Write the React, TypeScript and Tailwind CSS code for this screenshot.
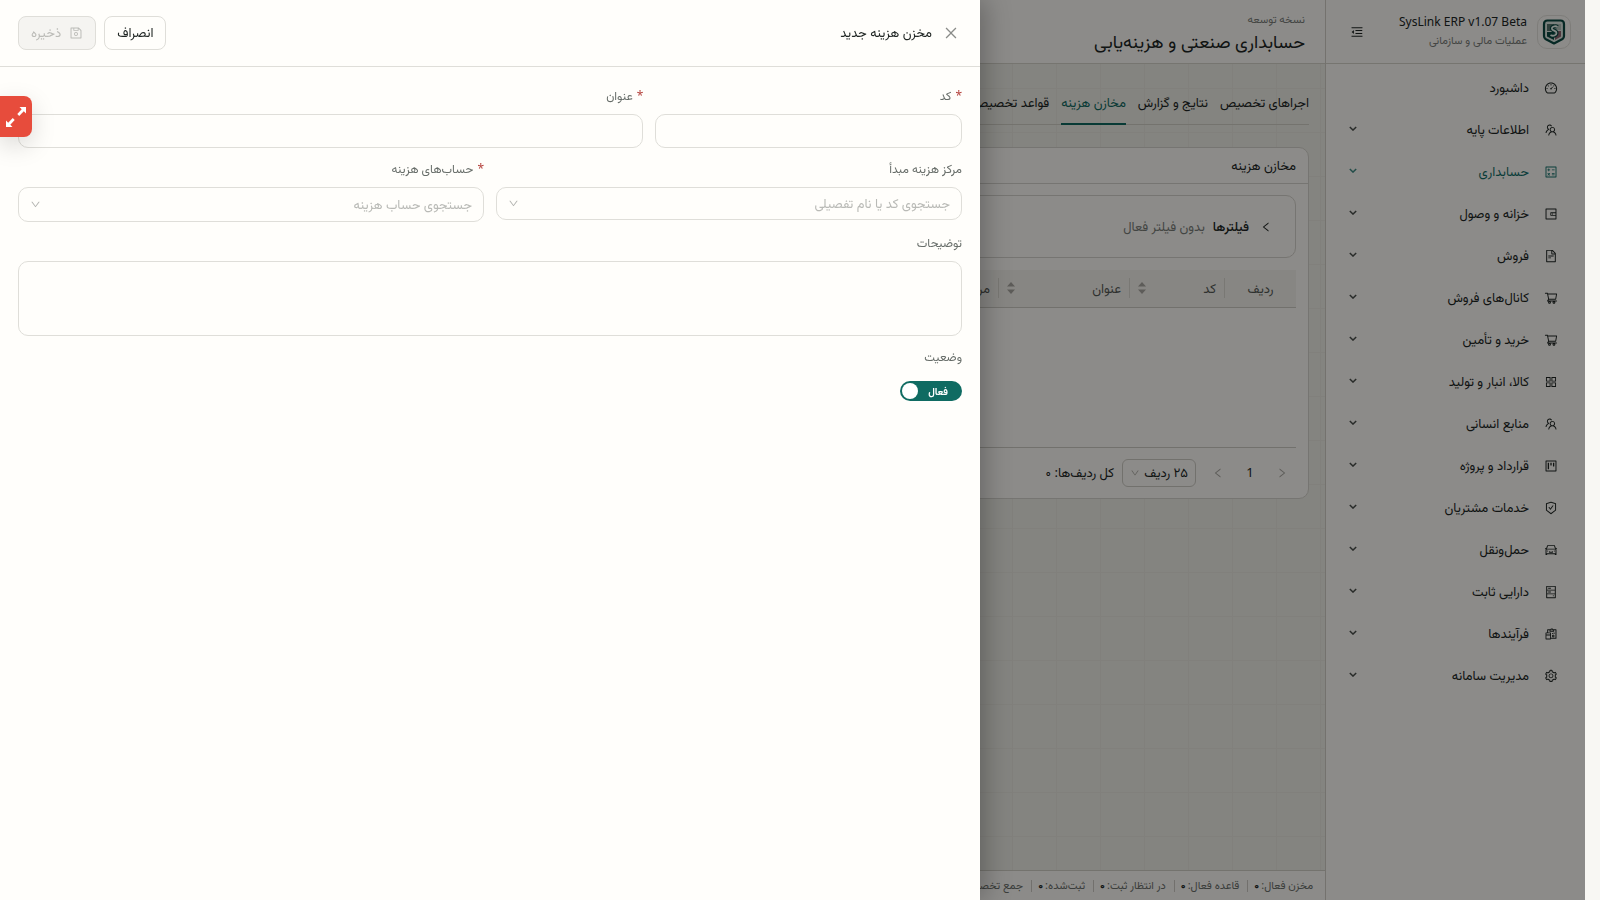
import type { ReactNode } from 'react'
import type { IconType } from 'react-icons'
import {
  AiOutlineAppstore,
  AiOutlineCalculator,
  AiOutlineCar,
  AiOutlineClose,
  AiOutlineDashboard,
  AiOutlineDown,
  AiOutlineFileText,
  AiOutlineHdd,
  AiOutlineLeft,
  AiOutlineMenuFold,
  AiOutlineProject,
  AiOutlineReconciliation,
  AiOutlineRight,
  AiOutlineSafetyCertificate,
  AiOutlineSave,
  AiOutlineSetting,
  AiOutlineShoppingCart,
  AiOutlineTeam,
  AiOutlineWallet,
} from 'react-icons/ai'
import clsx from 'clsx'

interface MenuItem {
  label: string
  icon: IconType
  active?: boolean
  leaf?: boolean
}

const MENU: MenuItem[] = [
  { label: 'داشبورد', icon: AiOutlineDashboard, leaf: true },
  { label: 'اطلاعات پایه', icon: AiOutlineTeam },
  { label: 'حسابداری', icon: AiOutlineCalculator, active: true },
  { label: 'خزانه و وصول', icon: AiOutlineWallet },
  { label: 'فروش', icon: AiOutlineFileText },
  { label: 'کانال‌های فروش', icon: AiOutlineShoppingCart },
  { label: 'خرید و تأمین', icon: AiOutlineShoppingCart },
  { label: 'کالا، انبار و تولید', icon: AiOutlineAppstore },
  { label: 'منابع انسانی', icon: AiOutlineTeam },
  { label: 'قرارداد و پروژه', icon: AiOutlineProject },
  { label: 'خدمات مشتریان', icon: AiOutlineSafetyCertificate },
  { label: 'حمل‌ونقل', icon: AiOutlineCar },
  { label: 'دارایی ثابت', icon: AiOutlineHdd },
  { label: 'فرآیندها', icon: AiOutlineReconciliation },
  { label: 'مدیریت سامانه', icon: AiOutlineSetting },
]

const TABS = ['اجراهای تخصیص', 'نتایج و گزارش', 'مخازن هزینه', 'قواعد تخصیص']
const STATS = ['مخزن فعال:', 'قاعده فعال:', 'در انتظار ثبت:', 'ثبت‌شده:', 'جمع تخصیص:']

function Logo() {
  return (
    <span className="grid size-[34px] shrink-0 place-items-center rounded-[10px] border border-[#e6e4de]">
      <svg viewBox="0 0 24 26" className="h-[26px] w-6" aria-hidden="true">
        <path d="M5.500 1.500h13q3.500 0 3.500 3.500v12q0 2-1.500 3L12 24.500 3.500 20Q2 19 2 17V5q0-3.500 3.500-3.500z" fill="#dfe9e3" stroke="#0b4a43" strokeWidth="2.200" strokeLinejoin="round" />
        <path d="M5 5h7v7H5z" fill="#56756e" />
        <path d="M12 5h7v6h-7z" fill="#b4c3bc" />
        <path d="M5 13h7v8l-7-3.500z" fill="#0b4a43" />
        <path d="M13 12h6v5.500L13 21z" fill="#8d6470" />
        <path d="M15.500 8c-2-1.500-6-.5-5.500 2 .5 2 4.500 1.500 4.500 4s-3.500 3.500-6 2" fill="none" stroke="#0b4a43" strokeWidth="4" />
        <path d="M15.500 8c-2-1.500-6-.5-5.500 2 .5 2 4.500 1.500 4.500 4s-3.500 3.500-6 2" fill="none" stroke="#f0faf4" strokeWidth="1.800" />
      </svg>
    </span>
  )
}

function Sidebar() {
  return (
    <aside className="w-[260px] shrink-0 border-l border-[#d3d0c8] bg-[#fffdf9]">
      <div className="flex h-16 items-center gap-2.5 border-b border-[#d8d5cd] pr-[14px] pl-[22px]">
        <Logo />
        <div className="flex-1 pb-1">
          <div className="text-right text-xs leading-5" dir="ltr">SysLink ERP v1.07 Beta</div>
          <div className="text-[11px] leading-4 text-[#7b7f7b]">عملیات مالی و سازمانی</div>
        </div>
        <button type="button" aria-label="جمع کردن منو" className="grid size-[18px] place-items-center">
          <AiOutlineMenuFold className="size-[14px]" />
        </button>
      </div>
      <nav className="pt-[3px]">
        {MENU.map(({ label, icon: Icon, active, leaf }) => (
          <a
            key={label}
            href="#"
            className={clsx('flex h-[42px] items-center gap-[15px] pr-[27px] pl-[23px] text-[13px]', active && 'text-[#12706a]')}
          >
            <Icon className="size-[14px] shrink-0" />
            <span className="flex-1">{label}</span>
            {!leaf && (
              <svg viewBox="0 0 10 6" className="mb-1 h-[5px] w-2 opacity-80" fill="none" stroke="currentColor" strokeWidth="1.800" aria-hidden="true">
                <path d="m1 1 4 4 4-4" />
              </svg>
            )}
          </a>
        ))}
      </nav>
    </aside>
  )
}

function Sorter() {
  return (
    <svg viewBox="0 0 8 12" className="h-3 w-2" fill="#a9a8a2" aria-hidden="true">
      <path d="M4 0 8 4.500H0zM4 12 8 7.500H0z" />
    </svg>
  )
}

function HeadCell({ label, className, sortable }: { label: string; className: string; sortable?: boolean }) {
  return (
    <th scope="col" className={clsx('p-0 font-normal', className)}>
      <div className="flex h-5 items-center justify-between border-l border-[#dddbd4] px-2">
        <span>{label}</span>
        {sortable && <Sorter />}
      </div>
    </th>
  )
}

function PoolCard() {
  return (
    <section className="mt-[22px] rounded-[10px] border border-[#d8d6cf] bg-[#fffdf9] text-[13px]">
      <h2 className="flex h-9 items-center border-b border-[#d8d6cf] px-3">مخازن هزینه</h2>
      <div className="px-3 py-[11px]">
        <button type="button" className="flex h-[63px] w-full items-center gap-2 rounded-[10px] border border-[#d8d6cf] px-[23px]">
          <AiOutlineLeft className="ml-[3px] size-3" />
          <span className="font-medium">فیلترها</span>
          <span className="text-[#7b7f7b]">بدون فیلتر فعال</span>
        </button>
        <table className="mt-3 w-full table-fixed border-b border-[#d0cec7] text-right text-[#555a57]">
          <thead className="bg-[#f6f4ee]">
            <tr className="h-[37px] border-b border-[#d0cec7]">
              <th scope="col" className="w-[72px] p-0 font-normal">
                <div className="flex h-5 items-center justify-center border-l border-[#dddbd4]">ردیف</div>
              </th>
              <HeadCell label="کد" className="w-[95px]" sortable />
              <HeadCell label="عنوان" className="w-[131px]" sortable />
              <HeadCell label="مرکز هزینه" className="w-auto" />
            </tr>
          </thead>
          <tbody>
            <tr className="h-[140px]">
              <td colSpan={4} />
            </tr>
          </tbody>
        </table>
        <div className="mt-[11px] flex h-7 items-center">
          <button type="button" aria-label="صفحه قبل" disabled className="grid size-7 place-items-center text-[#aaa9a3]">
            <AiOutlineRight className="size-3" />
          </button>
          <button type="button" className="mx-1 size-7">1</button>
          <button type="button" aria-label="صفحه بعد" disabled className="grid size-7 place-items-center text-[#aaa9a3]">
            <AiOutlineLeft className="size-3" />
          </button>
          <div className="mr-2 flex h-7 w-[74px] items-center rounded-md border border-[#d0cec7] px-[7px]">
            <select aria-label="تعداد ردیف" className="min-w-0 flex-1 appearance-none bg-transparent">
              <option>۲۵ ردیف</option>
            </select>
            <AiOutlineDown className="size-[10px] text-[#aaa9a3]" />
          </div>
          <span className="mr-2">کل ردیف‌ها: ۰</span>
        </div>
      </div>
    </section>
  )
}

function Workspace() {
  return (
    <div className="flex min-w-0 flex-1 flex-col">
      <header className="flex h-16 flex-col justify-center border-b border-[#d8d5cd] bg-[#fffdf9] px-5 pt-0.5">
        <div className="text-[11px] leading-4 text-[#7b7f7b]">نسخه توسعه</div>
        <h1 className="text-lg leading-7">حسابداری صنعتی و هزینه‌یابی</h1>
      </header>
      <main className="flex-1 px-4 pt-[18px]">
        <div role="tablist" className="flex h-[43px] gap-3 border-b border-[#d3d1c9] text-[13px]">
          {TABS.map((tab) => {
            const selected = tab === 'مخازن هزینه'
            return (
              <button
                key={tab}
                type="button"
                role="tab"
                aria-selected={selected}
                className={clsx('h-[43px] border-b-2 whitespace-nowrap', selected ? 'border-[#0f6b62] text-[#0f6b62]' : 'border-transparent')}
              >
                {tab}
              </button>
            )
          })}
        </div>
        <PoolCard />
      </main>
      <footer className="flex h-[30px] items-center overflow-hidden border-t border-[#d3d1c9] bg-[#fffdf9] px-3 text-[11px] whitespace-nowrap text-[#6c716d]">
        {STATS.map((stat, i) => (
          <span key={stat} className="flex items-center">
            {i > 0 && <span className="mr-1.5 ml-2 h-3 w-px bg-[#cfcdc6]" />}
            {stat}
            <b className="mr-0.5 text-[#202624]">۰</b>
          </span>
        ))}
      </footer>
    </div>
  )
}

function Field({ id, label, required, className, children }: { id: string; label: string; required?: boolean; className?: string; children: ReactNode }) {
  return (
    <div className={className}>
      <label htmlFor={id} className="mb-[7px] flex h-[22px] items-center gap-1 text-xs text-[#676d69]">
        {required && <span className="text-[#b4413c]">*</span>}
        {label}
      </label>
      {children}
    </div>
  )
}

function SearchSelect({ id, placeholder, className }: { id: string; placeholder: string; className: string }) {
  return (
    <div className={clsx('flex items-center rounded-[10px] border border-[#dfded9] px-[11px]', className)}>
      <input id={id} role="combobox" aria-expanded={false} placeholder={placeholder} className="min-w-0 flex-1 bg-transparent text-[13px] outline-none placeholder:text-[#b9bab6]" />
      <AiOutlineDown className="size-[11px] text-[#b3b4b0]" />
    </div>
  )
}

function PoolDrawer() {
  return (
    <div role="dialog" aria-label="مخزن هزینه جدید" className="fixed inset-y-0 left-0 w-full max-w-[980px] bg-[#fffefb] shadow-[6px_0_24px_rgba(0,0,0,0.25)]">
      <header className="flex h-[67px] items-center border-b border-[#dfded9] px-[18px]">
        <button type="button" aria-label="بستن" className="grid size-[22px] place-items-center text-[#8a8c89]">
          <AiOutlineClose className="size-4" />
        </button>
        <h2 className="mr-2 flex-1 text-[13px]">مخزن هزینه جدید</h2>
        <div className="flex gap-2 text-[13px]">
          <button type="button" className="h-[34px] rounded-lg border border-[#dfded9] px-3">انصراف</button>
          <button type="button" disabled className="flex h-[34px] items-center gap-2 rounded-lg border border-[#dfded9] bg-[#f5f4f1] px-3 text-[#bbbbb7]">
            <AiOutlineSave className="size-[14px]" />
            ذخیره
          </button>
        </div>
      </header>
      <form className="flex flex-col gap-[10px] px-[18px] pt-[18px]">
        <div className="grid grid-cols-3 gap-3">
          <Field id="code" label="کد" required>
            <input id="code" className="block h-[34px] w-full rounded-[10px] border border-[#dfded9] px-[11px] text-[13px]" />
          </Field>
          <Field id="title" label="عنوان" required className="col-span-2">
            <input id="title" className="block h-[34px] w-full rounded-[10px] border border-[#dfded9] px-[11px] text-[13px]" />
          </Field>
        </div>
        <div className="grid grid-cols-2 gap-3">
          <Field id="center" label="مرکز هزینه مبدأ">
            <SearchSelect id="center" placeholder="جستجوی کد یا نام تفصیلی" className="h-[33px]" />
          </Field>
          <Field id="accounts" label="حساب‌های هزینه" required>
            <SearchSelect id="accounts" placeholder="جستجوی حساب هزینه" className="h-[35px]" />
          </Field>
        </div>
        <Field id="notes" label="توضیحات">
          <textarea id="notes" className="block h-[75px] w-full resize-none rounded-[10px] border border-[#dfded9] px-[11px] py-1 text-[13px]" />
        </Field>
        <Field id="status" label="وضعیت">
          <button id="status" type="button" role="switch" aria-checked className="mt-[13px] flex h-5 w-[62px] items-center justify-between rounded-full bg-[#0f6b62] pr-[14px] pl-0.5 text-[10px] font-bold text-white">
            فعال
            <span className="size-4 rounded-full bg-white" />
          </button>
        </Field>
      </form>
    </div>
  )
}

export default function App() {
  return (
    <div dir="rtl" className="min-h-screen bg-[#f8f7f3] pr-[15px] font-['Noto_Sans','Vazirmatn',sans-serif] text-[#202624]">
      <div className="relative flex min-h-screen bg-[#f1f0e9] bg-[linear-gradient(to_right,#ebeae2_1px,transparent_1px),linear-gradient(to_bottom,#ebeae2_1px,transparent_1px)] bg-[size:44px_44px]">
        <Sidebar />
        <Workspace />
        <div className="absolute inset-0 bg-black/45" />
      </div>
      <PoolDrawer />
      <button type="button" aria-label="تمام صفحه" className="fixed top-24 left-0 flex h-[41px] w-8 items-center justify-end rounded-r-lg bg-[#e74c3c] pl-1.5 text-white shadow-[0_8px_24px_rgba(0,0,0,0.15)]">
        <svg viewBox="0 0 20 20" className="size-5" fill="currentColor" aria-hidden="true">
          <path d="M13.500 0H20v6.500l-2.200-2.200-4.600 4.600-1.900-1.900 4.400-4.800zM6.500 20H0v-6.500l2.200 2.200 4.600-4.600 1.900 1.900-4.400 4.800z" />
        </svg>
      </button>
    </div>
  )
}
